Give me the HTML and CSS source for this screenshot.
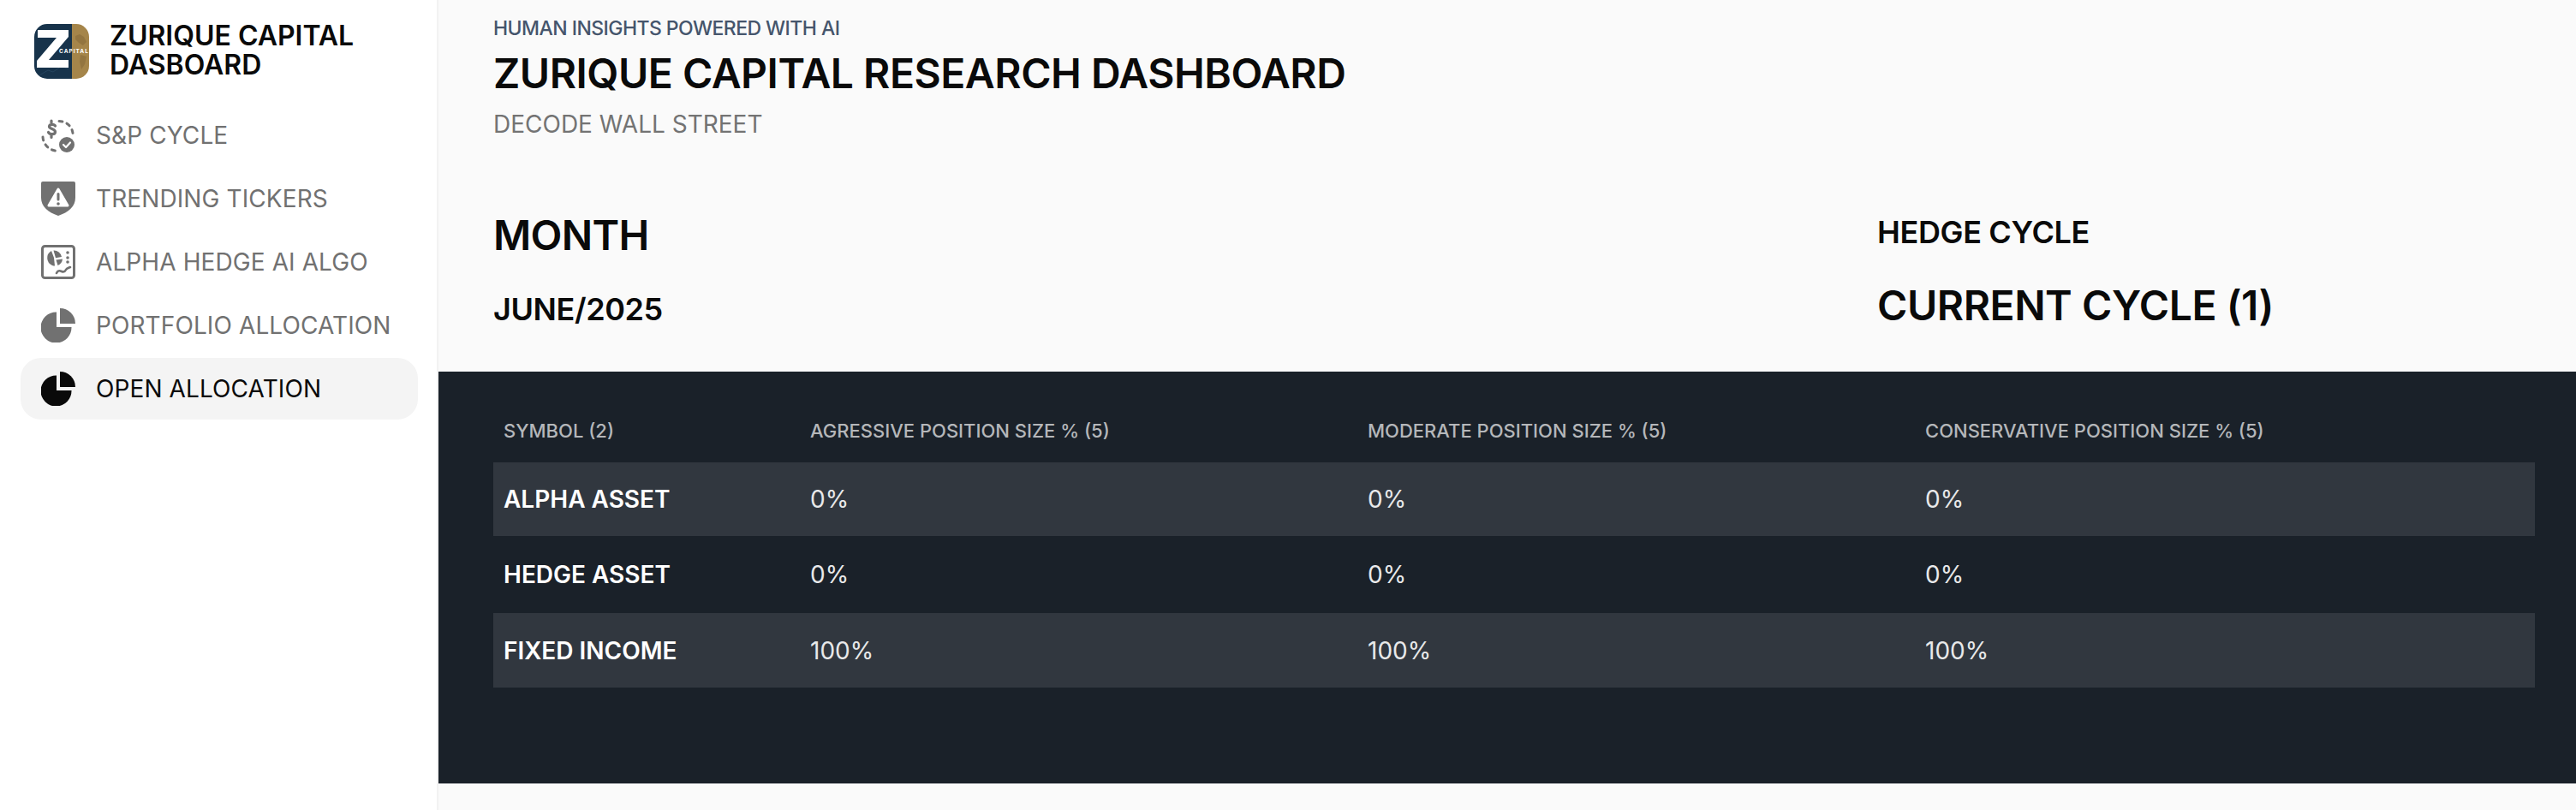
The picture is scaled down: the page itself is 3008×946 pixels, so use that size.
FILE: index.html
```html
<!DOCTYPE html>
<html lang="en">
<head>
<meta charset="utf-8">
<title>Zurique Capital Research Dashboard</title>
<link rel="stylesheet" href="styles.css">
</head>
<body>
<div class="app">
  <aside class="sidebar">
    <div class="brand">
      <svg class="logo" viewBox="0 0 64 64" aria-hidden="true">
        <defs><clipPath id="logo-clip"><rect width="64" height="64" rx="15"/></clipPath></defs>
        <g clip-path="url(#logo-clip)">
          <rect width="44" height="64" fill="#17334b"/>
          <rect x="44" width="20" height="64" fill="#a5854a"/>
          <path d="M48 14l5-2 5 3 3 6-4 4-5-3-4-4zM54 36l7 2-2 9-4 6-2-9z" fill="#937540"/>
          <path d="M6 60l10-6 6 2 10-7 8 4" fill="none" stroke="#25445e" stroke-width="1"/>
          <path d="M4 7h36v8L17 42h23v9H3v-8L26 16H4z" fill="#fff"/>
          <text class="logo-text" x="29" y="34">CAPITAL</text>
        </g>
      </svg>
      <div class="brand-name">ZURIQUE CAPITAL DASBOARD</div>
    </div>
    <nav class="nav">
      <a class="nav-item">
        <svg class="nav-icon" viewBox="0 0 40 40" aria-hidden="true">
          <path d="M21 3.500a16 16 0 0 1 16 14" fill="none" stroke="currentColor" stroke-width="3" stroke-linecap="round" stroke-dasharray="4 5.500"/>
          <path d="M2 22a17 17 0 0 0 15 16" fill="none" stroke="currentColor" stroke-width="3" stroke-linecap="round" stroke-dasharray="4 5.500"/>
          <path d="M16.500 9c-1-2-6.500-2.500-7 .5-.5 3.500 7 2.500 7 6.500 0 3.500-6.500 3.500-8 .5M12 3v2.500M12 20v2.500" fill="none" stroke="currentColor" stroke-width="3.200" stroke-linecap="round"/>
          <circle cx="30" cy="31" r="9" fill="currentColor"/>
          <path d="M26 31l3 3 5-5.500" fill="none" stroke="#fff" stroke-width="2.200" stroke-linecap="round" stroke-linejoin="round"/>
        </svg>
        <span>S&amp;P CYCLE</span>
      </a>
      <a class="nav-item">
        <svg class="nav-icon" viewBox="0 0 40 40" aria-hidden="true">
          <path d="M2 0h36a2 2 0 0 1 2 2v17c0 10-8 17-20 21C8 36 0 29 0 19V2a2 2 0 0 1 2-2z" fill="currentColor"/>
          <path d="M20 9L31 28H9z" fill="#fff" stroke="#fff" stroke-width="3" stroke-linejoin="round"/>
          <path d="M20 14.500v6.500" stroke="currentColor" stroke-width="3" stroke-linecap="round"/>
          <circle cx="20" cy="26" r="1.800" fill="currentColor"/>
        </svg>
        <span>TRENDING TICKERS</span>
      </a>
      <a class="nav-item">
        <svg class="nav-icon" viewBox="0 0 40 40" aria-hidden="true">
          <rect x="1.500" y="1.500" width="37" height="37" rx="3" fill="none" stroke="currentColor" stroke-width="3"/>
          <path d="M12 7a9.500 9.500 0 0 0 1 17c1 .5 2 .5 3 .5L15 15z" fill="currentColor"/>
          <path d="M14.500 6.500a9 9 0 0 1 9.500 7.500l-7 1.200z" fill="currentColor"/>
          <path d="M17.500 17.500l7.500-1a9 9 0 0 1-5.500 7.500z" fill="currentColor"/>
          <circle cx="31" cy="9" r="1.800" fill="currentColor"/>
          <circle cx="31" cy="15" r="1.800" fill="currentColor"/>
          <circle cx="31" cy="20" r="1.800" fill="currentColor"/>
          <path d="M18 33c2-4 4-3 6-2s4 0 5-2 3-2 5-3" fill="none" stroke="currentColor" stroke-width="2.600" stroke-linecap="round"/>
        </svg>
        <span>ALPHA HEDGE AI ALGO</span>
      </a>
      <a class="nav-item">
        <svg class="nav-icon" viewBox="0 0 40 40" aria-hidden="true">
          <path d="M22 0a18 18 0 0 1 18 18H22z" fill="currentColor"/>
          <path d="M18 4.500V22h17.500A18 18 0 1 1 18 4.500z" fill="currentColor"/>
        </svg>
        <span>PORTFOLIO ALLOCATION</span>
      </a>
      <a class="nav-item nav-item-active">
        <svg class="nav-icon" viewBox="0 0 40 40" aria-hidden="true">
          <path d="M22 0a18 18 0 0 1 18 18H22z" fill="currentColor"/>
          <path d="M18 4.500V22h17.500A18 18 0 1 1 18 4.500z" fill="currentColor"/>
        </svg>
        <span>OPEN ALLOCATION</span>
      </a>
    </nav>
  </aside>
  <main class="main">
    <header class="header">
      <p class="eyebrow">HUMAN INSIGHTS POWERED WITH AI</p>
      <h1 class="title">ZURIQUE CAPITAL RESEARCH DASHBOARD</h1>
      <p class="subtitle">DECODE WALL STREET</p>
    </header>
    <section class="summary">
      <div class="summary-left">
        <h2 class="month-label">MONTH</h2>
        <p class="month-value">JUNE/2025</p>
      </div>
      <div class="summary-right">
        <h2 class="cycle-label">HEDGE CYCLE</h2>
        <p class="cycle-value">CURRENT CYCLE (1)</p>
      </div>
    </section>
    <section class="panel">
      <table class="table">
        <colgroup>
          <col class="col-symbol"><col class="col-size"><col class="col-size"><col>
        </colgroup>
        <thead>
          <tr>
            <th>SYMBOL (2)</th>
            <th>AGRESSIVE POSITION SIZE % (5)</th>
            <th>MODERATE POSITION SIZE % (5)</th>
            <th>CONSERVATIVE POSITION SIZE % (5)</th>
          </tr>
        </thead>
        <tbody>
          <tr class="row-a"><td class="symbol">ALPHA ASSET</td><td>0%</td><td>0%</td><td>0%</td></tr>
          <tr class="row-b"><td class="symbol">HEDGE ASSET</td><td>0%</td><td>0%</td><td>0%</td></tr>
          <tr class="row-c"><td class="symbol">FIXED INCOME</td><td>100%</td><td>100%</td><td>100%</td></tr>
        </tbody>
      </table>
    </section>
  </main>
</div>
</body>
</html>
```
FILE: styles.css
```css
* { box-sizing: border-box; }
html, body { margin: 0; height: 100%; }
body {
  font-family: Inter, "Liberation Sans", sans-serif;
  background: #fafafa;
  color: #0a0a0a;
  overflow: hidden;
}
.app { display: flex; height: 946px; }
.sidebar {
  width: 512px;
  flex: none;
  background: #fff;
  border-right: 2px solid #f2f2f2;
  padding: 26px 22px 0 24px;
}
.brand { display: flex; align-items: center; gap: 24px; padding-left: 16px; }
.logo { width: 64px; height: 64px; flex: none; }
.logo-text { font-size: 6.500px; font-weight: 700; fill: #fff; letter-spacing: 1px; }
.brand-name { font-size: 32px; line-height: 34px; font-weight: 600; width: 320px; margin-top: -1px; }
.nav { display: flex; flex-direction: column; gap: 2px; margin-top: 29px; }
.nav-item {
  display: flex;
  align-items: center;
  gap: 24px;
  height: 72px;
  padding-left: 24px;
  border-radius: 24px;
  font-size: 28px;
  letter-spacing: .1px;
  color: #717171;
}
.nav-icon { width: 40px; height: 40px; flex: none; }
.nav-item-active { background: #f4f4f4; color: #0a0a0a; }
.main { flex: 1; min-width: 0; display: flex; flex-direction: column; }
.header { padding: 17px 64px 0; }
.eyebrow { margin: 0; font-size: 23px; line-height: 32px; font-weight: 500; letter-spacing: -.55px; color: #45556c; }
.title { margin: 9px 0 0; font-size: 48px; line-height: 56px; font-weight: 600; letter-spacing: -.48px; }
.subtitle { margin: 11px 0 0; font-size: 28px; line-height: 40px; color: #737373; }
.summary { display: flex; justify-content: space-between; padding: 80px 0 0 64px; height: 269px; }
.summary-right { width: 816px; }
.month-label { margin: 0; font-size: 48px; line-height: 60px; font-weight: 600; letter-spacing: -.7px; }
.month-value { margin: 28px 0 0; font-size: 36px; line-height: 56px; font-weight: 600; letter-spacing: -.4px; }
.cycle-label { margin: -2px 0 0; font-size: 36px; line-height: 56px; font-weight: 600; letter-spacing: -.35px; }
.cycle-value { margin: 30px 0 0; font-size: 48px; line-height: 56px; font-weight: 600; letter-spacing: -.45px; }
.panel { background: #1a2129; padding: 40px 48px 0 64px; height: 481px; }
.table { width: 100%; table-layout: fixed; border-collapse: collapse; }
.col-symbol { width: 358px; }
.col-size { width: 651px; }
.table th {
  height: 66px;
  padding: 0 12px 8px;
  text-align: left;
  font-size: 22px;
  font-weight: 500;
  color: #b5b7ba;
}
.table td { padding: 0 12px; font-size: 28px; color: #e8e9ea; }
.table .symbol { font-weight: 600; color: #fff; }
.row-a td { height: 86px; background: #31373f; }
.row-b td { height: 90px; }
.row-c td { height: 87px; background: #31373f; }
```
